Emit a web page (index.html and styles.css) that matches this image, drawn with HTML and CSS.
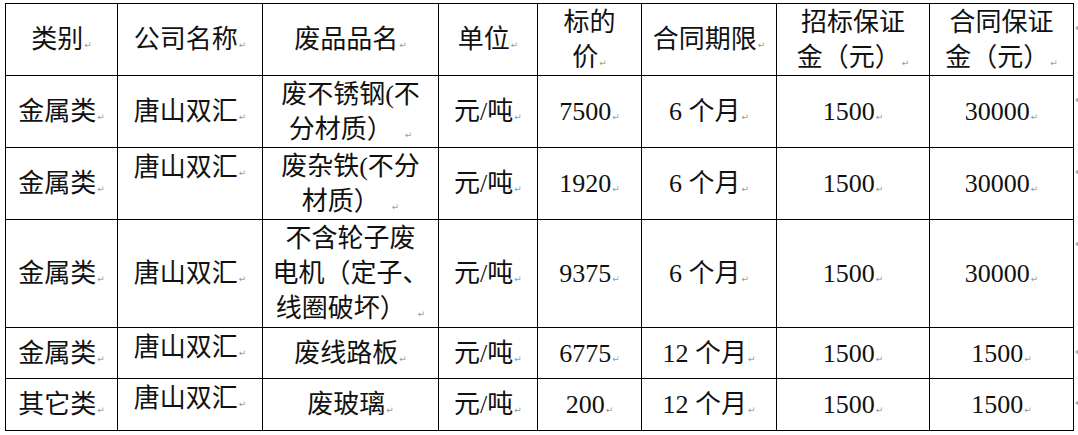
FILE: index.html
```html
<!DOCTYPE html>
<html lang="zh">
<head>
<meta charset="utf-8">
<link rel="stylesheet" href="styles.css">
</head>
<body>
<table class="sheet">
  <colgroup>
    <col class="c1"><col class="c2"><col class="c3"><col class="c4">
    <col class="c5"><col class="c6"><col class="c7"><col class="c8">
  </colgroup>
  <tr class="r-head">
    <td>类别<span class="pm">↵</span></td>
    <td>公司名称<span class="pm">↵</span></td>
    <td>废品品名<span class="pm">↵</span></td>
    <td>单位<span class="pm">↵</span></td>
    <td>标的<br>价<span class="pm">↵</span></td>
    <td>合同期限<span class="pm">↵</span></td>
    <td>招标保证<br>金（元）<span class="pm">↵</span></td>
    <td class="last">合同保证<br>金（元）<span class="pm">↵</span></td>
  </tr>
  <tr class="r-std">
    <td>金属类<span class="pm">↵</span></td>
    <td>唐山双汇<span class="pm">↵</span></td>
    <td>废不锈钢(不<br>分材质）<span class="pm sp">↵</span></td>
    <td>元/吨<span class="pm">↵</span></td>
    <td class="num">7500<span class="pm">↵</span></td>
    <td>6 个月<span class="pm">↵</span></td>
    <td class="num">1500<span class="pm">↵</span></td>
    <td class="num last">30000<span class="pm">↵</span></td>
  </tr>
  <tr class="r-std">
    <td>金属类<span class="pm">↵</span></td>
    <td class="top">唐山双汇<span class="pm">↵</span></td>
    <td>废杂铁(不分<br>材质）<span class="pm sp">↵</span></td>
    <td>元/吨<span class="pm">↵</span></td>
    <td class="num">1920<span class="pm">↵</span></td>
    <td>6 个月<span class="pm">↵</span></td>
    <td class="num">1500<span class="pm">↵</span></td>
    <td class="num last">30000<span class="pm">↵</span></td>
  </tr>
  <tr class="r-tall">
    <td>金属类<span class="pm">↵</span></td>
    <td>唐山双汇<span class="pm">↵</span></td>
    <td>不含轮子废<br>电机（定子、<br>线圈破坏）<span class="pm sp">↵</span></td>
    <td>元/吨<span class="pm">↵</span></td>
    <td class="num">9375<span class="pm">↵</span></td>
    <td>6 个月<span class="pm">↵</span></td>
    <td class="num">1500<span class="pm">↵</span></td>
    <td class="num last">30000<span class="pm">↵</span></td>
  </tr>
  <tr class="r-short">
    <td>金属类<span class="pm">↵</span></td>
    <td class="top">唐山双汇<span class="pm">↵</span></td>
    <td>废线路板<span class="pm">↵</span></td>
    <td>元/吨<span class="pm">↵</span></td>
    <td class="num">6775<span class="pm">↵</span></td>
    <td>12 个月<span class="pm">↵</span></td>
    <td class="num">1500<span class="pm">↵</span></td>
    <td class="num last">1500<span class="pm">↵</span></td>
  </tr>
  <tr class="r-short2">
    <td>其它类<span class="pm">↵</span></td>
    <td class="top">唐山双汇<span class="pm">↵</span></td>
    <td>废玻璃<span class="pm">↵</span></td>
    <td>元/吨<span class="pm">↵</span></td>
    <td class="num">200<span class="pm">↵</span></td>
    <td>12 个月<span class="pm">↵</span></td>
    <td class="num">1500<span class="pm">↵</span></td>
    <td class="num last">1500<span class="pm">↵</span></td>
  </tr>
</table>
</body>
</html>
```
FILE: styles.css
```css
html, body {
  margin: 0;
  padding: 0;
  background: #fff;
}

body {
  font-family: "Liberation Serif", "Noto Sans CJK SC", serif;
  font-size: 26px;
  color: #111;
}

.sheet {
  margin: 3px 0 0 5px;
  border-collapse: collapse;
  table-layout: fixed;
  width: 1069px;
}

.c1 { width: 112px; }
.c2 { width: 145px; }
.c3 { width: 176px; }
.c4 { width: 99px; }
.c5 { width: 104px; }
.c6 { width: 135px; }
.c7 { width: 153px; }
.c8 { width: 144px; }

.sheet td {
  border: 1px solid #000;
  padding: 0 2px;
  text-align: center;
  vertical-align: middle;
  line-height: 35px;
  white-space: nowrap;
  position: relative;
}

.sheet td.top {
  vertical-align: top;
  padding-top: 2px;
}

.r-head { height: 72px; }
.r-std { height: 72px; }
.r-tall { height: 108px; }
.r-short { height: 51px; }
.r-short2 { height: 52px; }

.pm {
  font-family: "DejaVu Sans", sans-serif;
  font-size: 9px;
  line-height: 1;
  color: #9a9a9a;
  margin-left: 1px;
}

.pm.sp {
  margin-left: 12px;
}

.sheet td.last::after {
  content: "";
  position: absolute;
  right: -6px;
  top: 21px;
  width: 0;
  height: 0;
  border-top: 3px solid transparent;
  border-bottom: 3px solid transparent;
  border-right: 4px solid #a8a8a8;
}
```
